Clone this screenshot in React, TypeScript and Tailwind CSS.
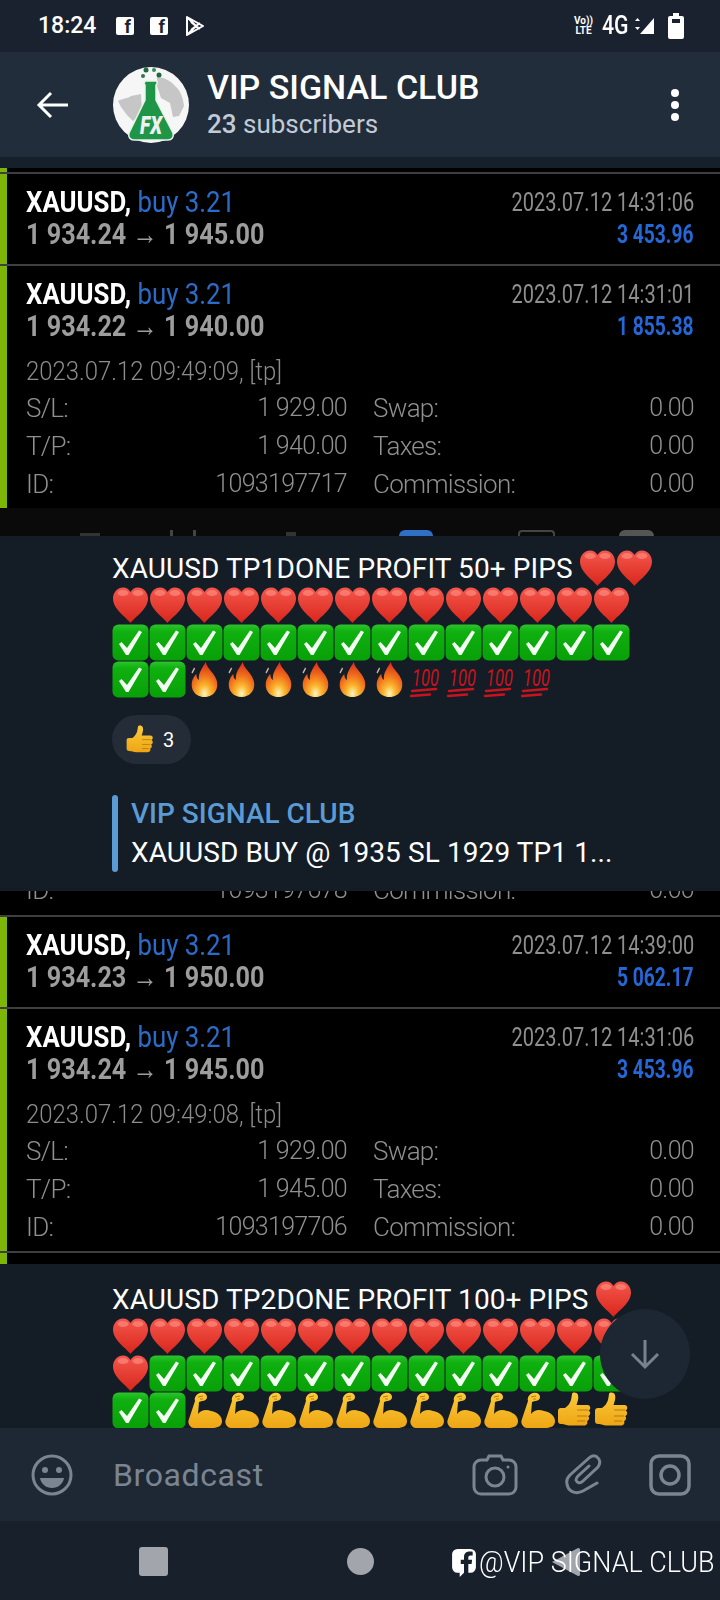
import React from "react";

const Heart = () => (
  <svg viewBox="0 0 37 37" className="w-[37px] h-[37px] shrink-0">
    <path d="M18.5 36C14 30 1 22 1 11.500 1 5 6 .5 11 .5c3.500 0 6 1.800 7.500 4.500C20 2.300 22.500 .5 26 .5c5 0 10 4.500 10 11C36 22 23 30 18.500 36z" fill="url(#heartFill)" />
    <ellipse cx="11" cy="6" rx="5.500" ry="3" fill="#ff9a90" opacity="0.55" />
    <ellipse cx="26" cy="6" rx="5.500" ry="3" fill="#ff9a90" opacity="0.55" />
  </svg>
);

const Check = () => (
  <svg viewBox="0 0 37 37" className="w-[37px] h-[37px] shrink-0">
    <rect x="0.5" y="0.5" width="36" height="36" rx="6" fill="url(#checkFill)" />
    <path d="M7 20l2.500-2 5.500 6L27 6.500l3 1.500-13.500 23H14z" fill="#f4fff4" />
  </svg>
);

const Fire = () => (
  <svg viewBox="-3 0 43 37" preserveAspectRatio="none" className="w-[37px] h-[37px] shrink-0">
    <path d="M20 1C21 7 29 11 32 18 36 26 31 36 18.500 36 6 36 1 26 5 18 6 16 7 15 9 13 9 16 10 18 12 19 11 12 16 7 20 1z" fill="url(#fireFill)" />
    <path d="M4 12l3-5" stroke="#c9b8a8" strokeWidth="1.500" />
  </svg>
);

const Hundred = () => (
  <svg viewBox="0 0 37 37" className="w-[37px] h-[37px] shrink-0 overflow-visible">
    <text x="4" y="25" fontFamily="Roboto, sans-serif" fontStyle="italic" fontWeight="400" fontSize="24" fill="#c8141e" textLength="27" lengthAdjust="spacingAndGlyphs">100</text>
    <path d="M4 30l24-2M3 35l19-1.500" stroke="#c8141e" strokeWidth="2.500" strokeLinecap="round" />
  </svg>
);

const Muscle = () => (
  <svg viewBox="0 0 37 37" className="w-[37px] h-[37px] shrink-0">
    <path d="M4 34C2 32 2 29 3 27L9 9C8 6 10 2 14 1 18 0 21 2 21 5 21 8 18 9 16 9L13 10 12 22C15 18 20 17 25 19 31 20 36 24 36 29 36 34 32 36 26 36L8 36C6 36 5 35 4 34z" fill="url(#yellowFill)" />
    <path d="M12 5l5-1M14 7l3 0" stroke="#b97a10" strokeWidth="1" fill="none" />
  </svg>
);

const Thumb = ({ className = "w-[37px] h-[37px]" }: { className?: string }) => (
  <svg viewBox="0 0 37 37" className={`${className} shrink-0`}>
    <path d="M2 19c0-2 1-3 3-3h4c3-2 5-5 6-8 .6-2 .6-4 1-6 .4-2 5-2 6 1 1 3-.5 7-1.500 10h11c3.500 0 3.500 5 1 5.500 2.500 1 2.300 5-.5 5.500 1.800 1.300 1.300 4.500-1 5 1 2 0 4.500-3 4.500H14c-4 0-5-1.500-9-1.500-2 0-3-1-3-3z" fill="url(#yellowFill)" />
    <path d="M21 18h11M21 24h10M21 29h8" stroke="#b97a10" strokeWidth="1" />
  </svg>
);

const Repeat = ({ n, children }: { n: number; children: React.ReactNode }) => (
  <>
    {Array.from({ length: n }).map((_, i) => (
      <React.Fragment key={i}>{children}</React.Fragment>
    ))}
  </>
);

const Detail = ({ a, b, c, d }: { a: string; b: string; c: string; d: string }) => (
  <div className="flex h-[38px] items-center text-[26px] font-light tracking-[-0.7px] text-[#909090]">
    <span className="w-[60px]">{a}</span>
    <span className="w-[261px] text-right text-[25px]">{b}</span>
    <span className="ml-[26px] w-[170px]">{c}</span>
    <span className="flex-1 text-right text-[25px]">{d}</span>
  </div>
);

type TradeProps = {
  prices: string;
  time: string;
  profit: string;
  opened?: string;
  details?: string[][];
};

const Trade = ({ prices, time, profit, opened, details }: TradeProps) => (
  <div className="flex border-t-2 border-[#3f3f3f]">
    <div className="w-[7px] shrink-0 bg-[#7db606]" />
    <div className="flex-1 pl-[19px] pr-[26px] pt-[12px]">
      <div className="flex h-[32px] items-center justify-between">
        <span className="origin-left scale-x-[0.86] whitespace-nowrap text-[30px] font-bold leading-[30px] text-white">
          XAUUSD, <span className="font-normal text-[#2a6cc8]">buy 3.21</span>
        </span>
        <span className="origin-right scale-x-[0.77] whitespace-nowrap text-[26px] leading-[30px] text-[#8f8f8f]">{time}</span>
      </div>
      <div className="flex h-[31px] items-center justify-between">
        <span className="origin-left scale-x-[0.84] whitespace-nowrap text-[30px] font-bold leading-[30px] text-[#9d9d9d]">
          {prices}
        </span>
        <span className="origin-right scale-x-[0.74] whitespace-nowrap text-[26px] font-bold leading-[30px] text-[#2467d6]">{profit}</span>
      </div>
      {opened ? (
        <>
          <div className="mt-[14px] flex h-[32px] items-center text-[26px] font-light text-[#8c8c8c]">
            <span className="origin-left scale-x-[0.92] whitespace-nowrap">{opened}</span>
          </div>
          <div className="mt-[2px] pb-[5px]">
            {details?.map((d) => (
              <Detail key={d[0]} a={d[0]} b={d[1]} c={d[2]} d={d[3]} />
            ))}
          </div>
        </>
      ) : (
        <div className="h-[15px]" />
      )}
    </div>
  </div>
);

const ClippedIcons = () => (
  <div className="flex h-[28px] items-end overflow-hidden bg-[#0a0a0a]">
    <div className="ml-[80px] h-[3px] w-[20px] bg-[#333]" />
    <div className="ml-[70px] h-[6px] w-[3px] bg-[#444]" />
    <div className="ml-[20px] h-[6px] w-[3px] bg-[#444]" />
    <div className="ml-[90px] h-[4px] w-[10px] bg-[#333]" />
    <div className="ml-[103px] h-[6px] w-[34px] rounded-t-md bg-[#2f6fc4]" />
    <div className="ml-[85px] h-[6px] w-[37px] rounded-t-sm border-2 border-b-0 border-[#444]" />
    <div className="ml-[64px] h-[6px] w-[35px] rounded-t-full bg-[#555]" />
  </div>
);

const FbGlyph = ({ className }: { className: string }) => (
  <svg viewBox="0 0 24 28" className={className}>
    <path d="M6 1h12a5 5 0 0 1 5 5v12a5 5 0 0 1-5 5h-2v-8h3l.5-4H16V9c0-1.200.6-2 2-2h2V3.500c-.7-.1-1.800-.2-3-.2-3 0-5 1.900-5 5.200V11H9v4h3v8l-4 4v-4H6a5 5 0 0 1-5-5V6a5 5 0 0 1 5-5z" fill="#fff" />
  </svg>
);

const App = () => {
  return (
    <div className="relative flex h-[1600px] w-[720px] flex-col overflow-hidden bg-[#141c26] font-['Roboto',sans-serif]">
      <svg className="absolute h-0 w-0">
        <defs>
          <linearGradient id="heartFill" x1="0" y1="0" x2="0" y2="1">
            <stop offset="0" stopColor="#f4574c" />
            <stop offset="1" stopColor="#d9261c" />
          </linearGradient>
          <linearGradient id="checkFill" x1="0" y1="0" x2="0" y2="1">
            <stop offset="0" stopColor="#2cc42c" />
            <stop offset="0.2" stopColor="#0fb00f" />
            <stop offset="1" stopColor="#08a008" />
          </linearGradient>
          <radialGradient id="fireFill" cx="0.5" cy="0.9" r="0.8">
            <stop offset="0" stopColor="#fff6c2" />
            <stop offset="0.3" stopColor="#fbb52d" />
            <stop offset="0.65" stopColor="#f0701c" />
            <stop offset="1" stopColor="#dd3a1a" />
          </radialGradient>
          <linearGradient id="yellowFill" x1="0" y1="0" x2="0" y2="1">
            <stop offset="0" stopColor="#fbcb3a" />
            <stop offset="1" stopColor="#eea514" />
          </linearGradient>
        </defs>
      </svg>

      {/* status bar */}
      <div className="flex h-[52px] shrink-0 items-center bg-[#1a2230] pl-[38px] pr-[36px] text-white">
        <span className="w-[78px] text-[23px] font-medium">18:24</span>
        <div className="flex h-[18px] w-[18px] items-end justify-end rounded-[2px] bg-white">
          <span className="mr-[3px] text-[18px] font-bold leading-[17px] text-[#1a2230]">f</span>
        </div>
        <div className="ml-[16px] flex h-[18px] w-[18px] items-end justify-end rounded-[2px] bg-white">
          <span className="mr-[3px] text-[18px] font-bold leading-[17px] text-[#1a2230]">f</span>
        </div>
        <svg viewBox="0 0 20 22" className="ml-[17px] h-[22px] w-[20px]" fill="none" stroke="#fff" strokeWidth="2" strokeLinejoin="round">
          <path d="M2 2l16 9-16 9zM2 2l9 9-9 9M6 15l5-4 4 3M6 7l5 4 4-3" />
        </svg>
        <div className="ml-auto flex flex-col items-center text-[10px] font-bold leading-[10px]">
          <span>Vo))</span>
          <span>LTE</span>
        </div>
        <span className="ml-[9px] w-[30px] origin-left scale-x-[0.85] text-[25px] font-medium">4G</span>
        <svg viewBox="0 0 24 18" className="h-[18px] w-[24px]" fill="#fff">
          <path d="M3 4l2.500-3L8 4zM3 10h5l-2.500 3zM22 1v16H8z" />
        </svg>
        <svg viewBox="0 0 16 26" className="ml-[12px] h-[26px] w-[16px]" fill="#fff">
          <path d="M5 0h6v3h3a2 2 0 0 1 2 2v19a2 2 0 0 1-2 2H2a2 2 0 0 1-2-2V5a2 2 0 0 1 2-2h3z" />
          <rect x="4" y="6" width="8" height="4" fill="#1a2230" />
        </svg>
      </div>

      {/* channel header */}
      <div className="flex h-[105px] shrink-0 items-center bg-[#212d3b] pl-[36px] pr-[41px]">
        <svg viewBox="0 0 32 28" className="h-[28px] w-[32px]" fill="none" stroke="#fff" strokeWidth="3">
          <path d="M32 14H3M15 2L3 14l12 12" />
        </svg>
        <svg viewBox="0 0 76 76" className="ml-[45px] h-[76px] w-[76px] shrink-0">
          <circle cx="38" cy="38" r="38" fill="#f6f6f6" />
          <path d="M5 34c5-3 9-2 13-5l10-2 1 18-9 9-6-6-6-8zM44 10c7 0 14 4 18 9 6 5 8 12 9 20l-5 10-6 1-3-14-9-5-4-12z" fill="#c6c6c6" />
          <path d="M32 14h12v3l-1 1v15l17 33c1 4-1 7-5 7H21c-4 0-6-3-5-7l16-33V18l-1-1z" fill="#1f9548" stroke="#e8f3ea" strokeWidth="1.500" />
          <circle cx="33" cy="3" r="2.500" fill="#1c6b3a" />
          <circle cx="41" cy="3" r="2" fill="#3a8a58" />
          <circle cx="30" cy="9" r="2" fill="#2a7a48" />
          <circle cx="46" cy="8" r="2.500" fill="#1c6b3a" />
          <text x="38" y="67" textAnchor="middle" fontFamily="Roboto, sans-serif" fontStyle="italic" fontWeight="900" fontSize="26" fill="#f0f0f0" textLength="22" lengthAdjust="spacingAndGlyphs">FX</text>
        </svg>
        <div className="ml-[18px] flex flex-col">
          <span className="h-[40px] text-[34px] font-medium leading-[40px] text-white">VIP SIGNAL CLUB</span>
          <span className="mt-[-1px] text-[26px] leading-[36px] text-[#c2cad6]">
            <span className="font-medium">23</span> subscribers
          </span>
        </div>
        <div className="ml-auto flex flex-col gap-[4px]">
          <div className="h-[8px] w-[8px] rounded-full bg-white" />
          <div className="h-[8px] w-[8px] rounded-full bg-white" />
          <div className="h-[8px] w-[8px] rounded-full bg-white" />
        </div>
      </div>
      <div className="h-[11px] shrink-0 bg-[#16202b]" />

      {/* first screenshot */}
      <div className="shrink-0 bg-black blur-[0.3px]">
        <div className="h-[4px] w-[7px] bg-[#7db606]" />
        <Trade prices="1 934.24 → 1 945.00" time="2023.07.12 14:31:06" profit="3 453.96" />
        <Trade
          prices="1 934.22 → 1 940.00"
          time="2023.07.12 14:31:01"
          profit="1 855.38"
          opened="2023.07.12 09:49:09, [tp]"
          details={[
            ["S/L:", "1 929.00", "Swap:", "0.00"],
            ["T/P:", "1 940.00", "Taxes:", "0.00"],
            ["ID:", "1093197717", "Commission:", "0.00"],
          ]}
        />
        <ClippedIcons />
      </div>

      {/* first message */}
      <div className="flex h-[355px] shrink-0 flex-col bg-[#141c26] pl-[112px] pt-[14px]">
        <div className="flex h-[37px] items-center text-[28px] tracking-[0.1px] text-white">
          <span className="w-[467px] whitespace-nowrap">XAUUSD TP1DONE PROFIT 50+ PIPS</span>
          <Heart />
          <Heart />
        </div>
        <div className="flex">
          <Repeat n={14}><Heart /></Repeat>
        </div>
        <div className="flex">
          <Repeat n={14}><Check /></Repeat>
        </div>
        <div className="flex">
          <Repeat n={2}><Check /></Repeat>
          <Repeat n={6}><Fire /></Repeat>
          <Repeat n={4}><Hundred /></Repeat>
        </div>
        <div className="mt-[17px] flex h-[49px] w-[79px] items-center rounded-full bg-[#232c37] pl-[13px]">
          <Thumb className="h-[30px] w-[30px]" />
          <span className="ml-[8px] text-[20px] text-white">3</span>
        </div>
        <div className="mt-[31px] flex h-[77px]">
          <div className="w-[6px] rounded-full bg-[#5b9bd5]" />
          <div className="ml-[13px] flex flex-col">
            <span className="h-[38px] text-[28px] font-medium leading-[38px] text-[#5b9bd5]">VIP SIGNAL CLUB</span>
            <span className="h-[39px] whitespace-nowrap text-[28px] leading-[39px] tracking-[0.1px] text-white">XAUUSD BUY @ 1935 SL 1929 TP1 1...</span>
          </div>
        </div>
      </div>

      {/* second screenshot */}
      <div className="shrink-0 bg-black blur-[0.3px]">
        <div className="h-[24px] overflow-hidden pl-[26px] pr-[26px]">
          <div className="-mt-[20px]">
            <Detail a="ID:" b="1093197678" c="Commission:" d="0.00" />
          </div>
        </div>
        <Trade prices="1 934.23 → 1 950.00" time="2023.07.12 14:39:00" profit="5 062.17" />
        <Trade
          prices="1 934.24 → 1 945.00"
          time="2023.07.12 14:31:06"
          profit="3 453.96"
          opened="2023.07.12 09:49:08, [tp]"
          details={[
            ["S/L:", "1 929.00", "Swap:", "0.00"],
            ["T/P:", "1 945.00", "Taxes:", "0.00"],
            ["ID:", "1093197706", "Commission:", "0.00"],
          ]}
        />
        <div className="flex h-[13px] border-t-2 border-[#3f3f3f]">
          <div className="w-[7px] bg-[#7db606]" />
        </div>
      </div>

      {/* second message, cut by the input bar */}
      <div className="min-h-0 flex-1 overflow-hidden bg-[#141c26] pl-[112px] pt-[17px]">
        <div className="flex h-[37px] items-center text-[28px] tracking-[0.1px] text-white">
          <span className="w-[483px] whitespace-nowrap">XAUUSD TP2DONE PROFIT 100+ PIPS</span>
          <Heart />
        </div>
        <div className="flex">
          <Repeat n={14}><Heart /></Repeat>
        </div>
        <div className="flex">
          <Heart />
          <Repeat n={13}><Check /></Repeat>
        </div>
        <div className="flex">
          <Repeat n={2}><Check /></Repeat>
          <Repeat n={10}><Muscle /></Repeat>
          <Repeat n={2}><Thumb /></Repeat>
        </div>
      </div>

      {/* input bar */}
      <div className="flex h-[93px] shrink-0 items-center bg-[#1e2835] pl-[31px] pr-[29px] text-[#7b8591]">
        <svg viewBox="0 0 42 42" className="h-[42px] w-[42px]" fill="none" stroke="currentColor" strokeWidth="3">
          <circle cx="21" cy="21" r="19" />
          <circle cx="14" cy="16" r="3" fill="currentColor" stroke="none" />
          <circle cx="28" cy="16" r="3" fill="currentColor" stroke="none" />
          <path d="M9 24h24c-1 6-6 10-12 10S10 30 9 24z" fill="currentColor" stroke="none" />
        </svg>
        <span className="ml-[40px] text-[32px] tracking-[0.6px]">Broadcast</span>
        <svg viewBox="0 0 46 42" className="ml-auto h-[42px] w-[46px]" fill="none" stroke="currentColor" strokeWidth="3">
          <path d="M9 6h6l2-4h12l2 4h6a7 7 0 0 1 7 7v20a7 7 0 0 1-7 7H9a7 7 0 0 1-7-7V13a7 7 0 0 1 7-7z" />
          <circle cx="23" cy="23" r="9" />
          <circle cx="36" cy="13" r="1.500" fill="currentColor" stroke="none" />
        </svg>
        <svg viewBox="0 0 38 42" className="ml-[47px] h-[42px] w-[38px]" fill="none" stroke="currentColor" strokeWidth="3" strokeLinecap="round">
          <path d="M32 29L18 37C10 41 3 37 2 30 1 26 3 23 5 21L24 4C27 1 31 1 33 4 36 7 35 10 33 13L18 27C15 30 12 29 11 26 11 24 12 23 13 22L24 12" />
        </svg>
        <svg viewBox="0 0 42 42" className="ml-[46px] h-[42px] w-[42px]" fill="none" stroke="currentColor" strokeWidth="3.500">
          <rect x="2" y="2" width="38" height="38" rx="8" />
          <circle cx="21" cy="21" r="9" />
        </svg>
      </div>

      {/* nav bar */}
      <div className="flex h-[79px] shrink-0 items-center bg-[#18202b] pl-[139px] text-[#a2a5ab]">
        <div className="mt-[2px] h-[29px] w-[29px] rounded-[3px] bg-[#a2a5ab]" />
        <div className="ml-[179px] mt-[2px] h-[27px] w-[27px] rounded-full bg-[#a2a5ab]" />
        <svg viewBox="0 0 28 28" className="ml-[178px] mt-[2px] h-[28px] w-[28px]" fill="currentColor">
          <path d="M0 14L26 0c2 0 2 1 2 2v24c0 1 0 2-2 2z" />
        </svg>
      </div>

      {/* scroll to bottom button */}
      <div className="absolute left-[600px] top-[1309px] flex h-[90px] w-[90px] items-center justify-center rounded-full bg-[#1c2733]">
        <svg viewBox="0 0 32 32" className="h-[32px] w-[32px]" fill="none" stroke="#77828f" strokeWidth="3">
          <path d="M16 2v27M3 16l13 13 13-13" />
        </svg>
      </div>

      {/* facebook watermark over the nav bar */}
      <div className="absolute left-[451px] top-[1541px] flex items-center text-white">
        <FbGlyph className="h-[32px] w-[26px]" />
        <span className="ml-[2px] origin-left scale-x-[0.93] whitespace-nowrap text-[29px] font-light">@VIP SIGNAL CLUB</span>
      </div>
    </div>
  );
};

export default App;
